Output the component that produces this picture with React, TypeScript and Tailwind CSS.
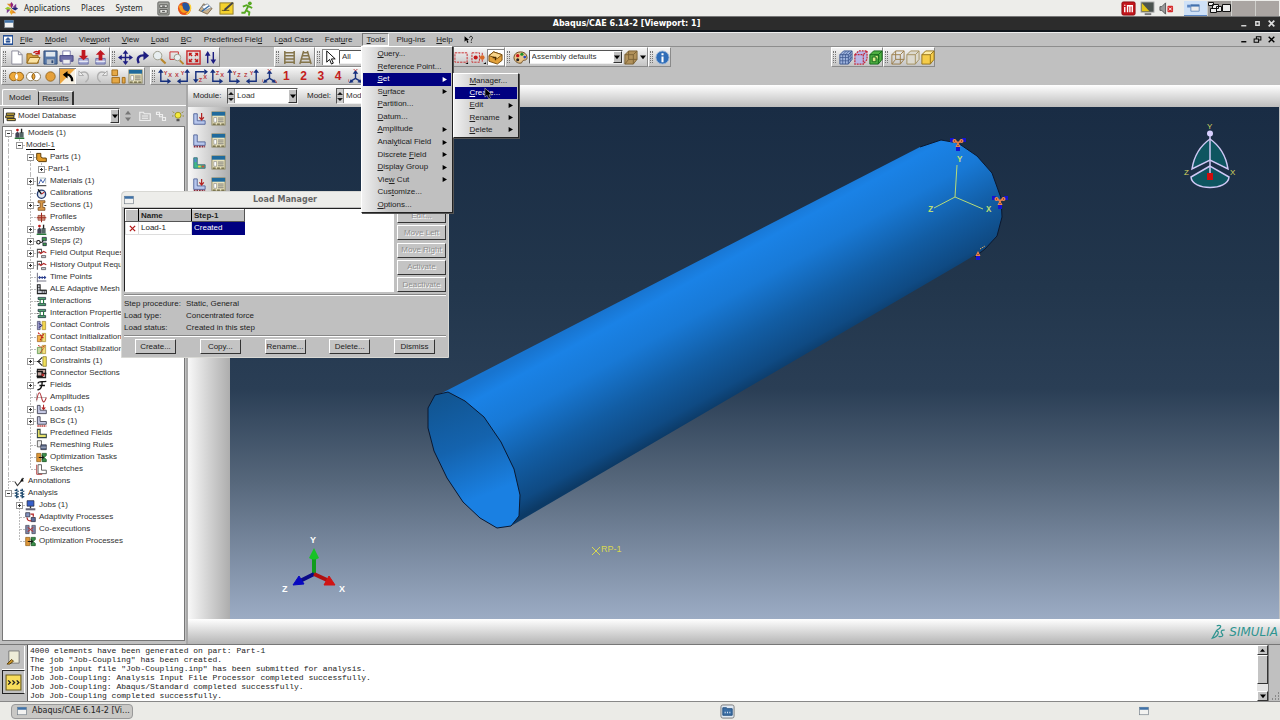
import React from "react";

type Kids = { children?: React.ReactNode };

/* ---------- small helpers ---------- */

function Svg({ s = "size-[15px]", children }: Kids & { s?: string }) {
  return (
    <svg viewBox="0 0 16 16" className={`${s} shrink-0`} fill="none" aria-hidden="true">
      {children}
    </svg>
  );
}

/** Renders a label whose character after "&" is the underlined shortcut key. */
function Key({ text }: { text: string }) {
  const i = text.indexOf("&");
  if (i < 0) return <>{text}</>;
  return (
    <>
      {text.slice(0, i)}
      <u>{text[i + 1]}</u>
      {text.slice(i + 2)}
    </>
  );
}

function Group({ w, children }: Kids & { w: string }) {
  return (
    <div
      className={`${w} flex h-full shrink-0 items-center border border-t-white border-l-white border-r-[#8a8a8a] border-b-[#8a8a8a] bg-linear-to-b from-[#f4f4f4] to-[#c4c4c4]`}
    >
      <span className="ml-px h-3 w-[3px] shrink-0 border-x border-dotted border-[#777]" />
      <div className="flex min-w-0 flex-1 items-center justify-around pl-[2px]">{children}</div>
    </div>
  );
}

function Tool({ label, on, children }: Kids & { label: string; on?: boolean }) {
  return (
    <button
      aria-label={label}
      className={`flex h-4 w-[17px] min-w-[15px] items-center justify-center ${on ? "bg-white shadow-[inset_1px_1px_0_#888]" : ""}`}
    >
      {children}
    </button>
  );
}

function Arrow() {
  return (
    <svg viewBox="0 0 8 8" className="size-[6px]" aria-hidden="true">
      <path d="M0 2h8L4 7z" fill="#000" />
    </svg>
  );
}

function Combo({ w, h, label, options, children }: Kids & { w: string; h: string; label: string; options: string[] }) {
  return (
    <div className={`${w} ${h} relative flex shrink-0 items-center border border-[#555] border-r-[#eee] border-b-[#eee] bg-white`}>
      {children}
      <select aria-label={label} className="h-full min-w-0 flex-1 appearance-none bg-transparent pl-[2px] text-[8px] leading-none text-[#333] outline-none">
        {options.map((o) => (
          <option key={o}>{o}</option>
        ))}
      </select>
      <span className="pointer-events-none flex h-full w-[9px] items-center justify-center border border-white border-r-[#333] border-b-[#333] bg-[#c0c0c0]">
        <Arrow />
      </span>
    </div>
  );
}

/* ---------- desktop panel ---------- */

function DesktopPanel() {
  return (
    <header className="flex h-4 shrink-0 items-center bg-[#ededea] pl-1 font-['Noto_Sans',sans-serif] text-[8px] text-[#222]">
      <Svg>
        <g transform="translate(8 8)">
          <path d="M0-7l2 3-2 4-2-4z" fill="#932279" />
          <path d="M7 0L4 2 0 0l4-2z" fill="#262577" />
          <path d="M0 7l-2-3 2-4 2 4z" fill="#efa724" />
          <path d="M-7 0l3-2 4 2-4 2z" fill="#9ccd2a" />
          <path d="M-5-5h4v4zM5 5H1V1z" fill="#e08a2c" />
          <path d="M5-5v4H1zM-5 5V1h4z" fill="#7d3f8f" />
        </g>
      </Svg>
      <nav className="ml-[5px] flex gap-[11px]">
        <button>Applications</button>
        <button>Places</button>
        <button>System</button>
      </nav>
      <div className="ml-[13px] flex items-center gap-[6px]">
        <Svg>
          <rect x="2" y="1" width="12" height="14" rx="1" fill="#a9aba6" stroke="#5a5c58" />
          <path d="M4 4h8v3H4zM4 9h8v4H4z" fill="#e2e3df" stroke="#5a5c58" />
          <path d="M6.500 5.500h3M6.500 11h3" stroke="#333" />
        </Svg>
        <Svg>
          <circle cx="8" cy="8" r="7" fill="#e5541b" />
          <path d="M6 2a6 6 0 0 1 8 7c-1 2-4 3-5 1-2-1-4-4-3-8z" fill="#25559f" />
          <path d="M2 5c2-1 3 0 4 1 0 3 2 5 5 5-2 3-8 2-9-6z" fill="#f6a31d" />
          <path d="M13 3c3 4 1 9-3 11" stroke="#fbd034" strokeWidth="1.500" />
        </Svg>
        <Svg>
          <path d="M1 10l5-7 9 5-5 6z" fill="#c9b18c" stroke="#7c6a50" />
          <path d="M4 6l6-3 4 4-6 3z" fill="#fff" stroke="#8a95a5" />
          <path d="M4 11l8-6" stroke="#3a6ea5" strokeWidth="1.500" />
        </Svg>
        <Svg>
          <rect x="1" y="2" width="14" height="12" fill="#f5d22d" stroke="#8f7b2a" />
          <path d="M3 10h8" stroke="#6c5b10" />
          <path d="M5 11l1-3 8-7 1.500 1.500L7 10z" fill="#444" />
        </Svg>
        <Svg>
          <circle cx="10.500" cy="2.500" r="2" fill="#56a820" />
          <path d="M3 6l4-1.500L10 6l3 1.500M8.500 6L6.500 10l3.500 2-.5 3.500M6.500 10L5 12.500H1.500" stroke="#56a820" strokeWidth="2" />
        </Svg>
      </div>
      <div className="mr-px ml-auto flex items-center gap-1">
        <Svg>
          <rect x="1" y="1" width="14" height="14" rx="1.500" fill="#c4161c" stroke="#8c0b10" />
          <path d="M4 4v1M4 6.500V12M7 12V5h2.500v7M9.500 5H12v7" stroke="#fff" strokeWidth="1.500" />
        </Svg>
        <Svg>
          <rect x="1" y="1" width="14" height="11" fill="#4c534f" stroke="#bbb" />
          <path d="M2 2l8 9H2z" fill="#e2c317" />
          <path d="M5 14h7" stroke="#777" strokeWidth="2" />
        </Svg>
        <Svg>
          <path d="M1 6h2l4-4v12l-4-4H1z" fill="#999" stroke="#555" />
          <rect x="9" y="5" width="6" height="7" rx="1" fill="#d52a2a" />
          <path d="M10.500 7l3 3M13.500 7l-3 3" stroke="#fff" />
        </Svg>
        <div className="ml-[6px] flex h-[15px] w-[95px] gap-px bg-[#cfcfcb]">
          <div className="flex flex-1 items-center justify-center border-b border-[#5b86c2] bg-[#cfe1f7]">
            <svg viewBox="0 0 20 14" className="h-[13px] w-[19px]">
              <path d="M1 4h6v3H1z" fill="#5b86c2" />
              <path d="M5 4h9v7H5z" fill="#ececec" stroke="#6b8fbf" />
              <path d="M5 4h9v2H5z" fill="#4372ae" />
            </svg>
          </div>
          <div className="flex-1 bg-[#9b9794]">
            <svg viewBox="0 0 23 14" className="h-[14px] w-full">
              <path d="M.5 1.500h5v3h-5zM2.500 7.500h6v4h-6zM4.500 3.500h6v4h-6zM14.500 3.500h8v7h-8zM8.500 5.500h5v5h-5z" fill="#eee" stroke="#111" />
            </svg>
          </div>
          <div className="flex-1 bg-[#aaa5a2]" />
          <div className="flex-1 bg-[#aaa5a2]" />
        </div>
      </div>
    </header>
  );
}

function WindowIcon({ s = "size-[10px]" }: { s?: string }) {
  return (
    <Svg s={s}>
      <rect x="1" y="2" width="14" height="12" fill="#f2f2f0" stroke="#6f7a85" />
      <path d="M1 2h14v4H1z" fill="#3f72a8" />
    </Svg>
  );
}

function TitleBar() {
  return (
    <div className="flex h-4 shrink-0 items-center border-t border-b-2 border-t-[#777] border-b-[#10151c] bg-[#2c2c2c] px-1 text-white">
      <WindowIcon />
      <h1 className="flex-1 text-center font-['DejaVu_Sans',sans-serif] text-[8px] leading-none font-bold">Abaqus/CAE 6.14-2 [Viewport: 1]</h1>
      <div className="flex gap-[5px]">
        <button aria-label="Minimize">
          <Svg s="size-[9px]"><path d="M4 12h9" stroke="#ddd" strokeWidth="2.500" /></Svg>
        </button>
        <button aria-label="Maximize">
          <Svg s="size-[9px]"><path d="M5 5h6v6H5z" stroke="#ddd" strokeWidth="2.500" /></Svg>
        </button>
        <button aria-label="Close">
          <Svg s="size-[9px]"><path d="M3 3l10 10M13 3L3 13" stroke="#ddd" strokeWidth="3" /></Svg>
        </button>
      </div>
    </div>
  );
}

/* ---------- menus ---------- */

type Item = { text: string; sub?: boolean };

const toolsMenu: Item[] = [
  { text: "&Query..." },
  { text: "&Reference Point..." },
  { text: "&Set", sub: true },
  { text: "S&urface", sub: true },
  { text: "&Partition..." },
  { text: "&Datum..." },
  { text: "&Amplitude", sub: true },
  { text: "Anal&ytical Field", sub: true },
  { text: "Discrete &Field", sub: true },
  { text: "&Display Group", sub: true },
  { text: "Vie&w Cut", sub: true },
  { text: "Cus&tomize..." },
  { text: "&Options..." },
];

const setMenu: Item[] = [
  { text: "&Manager..." },
  { text: "&Create..." },
  { text: "&Edit", sub: true },
  { text: "&Rename", sub: true },
  { text: "&Delete", sub: true },
];

function MenuList({ items, active }: { items: Item[]; active: number }) {
  return (
    <>
      {items.map((it, i) => (
        <button
          key={it.text}
          role="menuitem"
          className={`flex items-center justify-between overflow-hidden pr-1 pl-[14px] text-left text-[8px] leading-none whitespace-nowrap ${i === active ? "bg-[#000080] text-white" : "text-[#222]"}`}
        >
          <span>
            <Key text={it.text} />
          </span>
          {it.sub && (
            <svg viewBox="0 0 8 8" className="size-[5px]" aria-hidden="true">
              <path d="M1 0l7 4-7 4z" fill={i === active ? "#fff" : "#000"} />
            </svg>
          )}
        </button>
      ))}
    </>
  );
}

const menuBox =
  "absolute z-30 grid auto-rows-fr border border-t-white border-l-white border-r-[#222] border-b-[#222] bg-[linear-gradient(to_right,#f0f0f0,#c0c0c0_30px)] p-px shadow-[1px_1px_0_#555]";

function ToolsMenu() {
  return (
    <div role="menu" className={`${menuBox} top-[13px] -left-px h-[167px] w-[92px]`}>
      <MenuList items={toolsMenu} active={2} />
      <div role="menu" className={`${menuBox} top-[26px] left-[91px] h-[65px] w-[66px]`}>
        <MenuList items={setMenu} active={1} />
        <svg viewBox="0 0 10 14" className="absolute top-[13px] left-[30px] h-[13px] w-[9px]" aria-hidden="true">
          <path d="M1 1v10l2.500-2 1.800 4 1.900-1-1.700-3.500H9z" fill="#000" stroke="#bbb" strokeWidth=".7" />
        </svg>
      </div>
    </div>
  );
}

const before = ["&File", "&Model", "Vie&wport", "&View", "&Load", "&BC", "Predefined Fiel&d", "L&oad Case", "Feat&ure"];

function MenuBar() {
  return (
    <nav className="flex h-[15px] shrink-0 items-center border-t border-b border-t-[#eee] border-b-[#8d8d8d] bg-[#c0c0c0] pl-[3px] text-[8px] leading-none text-[#222]">
      <Svg s="size-[10px]">
        <rect x="0" y="1" width="16" height="14" fill="#fff" stroke="#234e94" strokeWidth="3" />
        <path d="M4 8h8M8 4l3 3H5zM5 9.500h6v2H5z" stroke="#234e94" fill="#234e94" />
      </Svg>
      <div className="ml-[7px] flex items-center gap-3">
        {before.map((t) => (
          <button key={t}>
            <Key text={t} />
          </button>
        ))}
      </div>
      <div className="relative ml-[10px]">
        <button className="h-[13px] w-[27px] border border-t-[#777] border-l-[#777] border-r-white border-b-white bg-[#c8c8c8]">
          <Key text="&Tools" />
        </button>
        <ToolsMenu />
      </div>
      <div className="ml-[7px] flex items-center gap-[11px]">
        <button>
          <Key text="Plu&g-ins" />
        </button>
        <button>
          <Key text="&Help" />
        </button>
        <button aria-label="Context help">
          <Svg s="size-[9px]">
            <path d="M1 2v10l3-3 2 5 2-1-2-4h3z" fill="#000" />
            <path d="M10 5c0-4 5-3 5 0 0 2-2 2-2 5M13 12v2" stroke="#000" strokeWidth="1.500" />
          </Svg>
        </button>
      </div>
      <div className="mr-1 ml-auto flex gap-[5px]">
        <button aria-label="Minimize viewport">
          <Svg s="size-[9px]"><path d="M4 12h9" stroke="#000" strokeWidth="2.500" /></Svg>
        </button>
        <button aria-label="Restore viewport">
          <Svg s="size-[9px]"><path d="M2 7h8v6H2zM6 6V3h8v6h-3" stroke="#000" strokeWidth="1.800" /></Svg>
        </button>
        <button aria-label="Close viewport">
          <Svg s="size-[9px]"><path d="M3 3l10 10M13 3L3 13" stroke="#000" strokeWidth="2.500" /></Svg>
        </button>
      </div>
    </nav>
  );
}

/* ---------- toolbars ---------- */

function Cube({ fill, line, extra }: { fill: string; line: string; extra?: React.ReactNode }) {
  return (
    <Svg>
      <path d="M2 5l4-4h9v9l-4 5H2z" fill={fill} />
      {extra}
      <path d="M2 5h9v10H2zM2 5l4-4h9l-4 4M15 1v9l-4 5" stroke={line} />
    </Svg>
  );
}

function RowOne() {
  return (
    <div className="flex h-5 shrink-0 items-stretch bg-[#c0c0c0] pl-px">
      <Group w="w-[109px]">
        <Tool label="New">
          <Svg><path d="M3 1h7l4 4v10H3z" fill="#fff" stroke="#8a8a99" /><path d="M10 1v4h4" stroke="#8a8a99" /></Svg>
        </Tool>
        <Tool label="Open">
          <Svg>
            <path d="M1 14V4h5l1 2h6v8z" fill="#d9a441" stroke="#94691a" />
            <path d="M1 14l3-6h11l-3 6z" fill="#fbe3a2" stroke="#94691a" />
            <path d="M8 3c2-2 4-2 6 0M14 0v4h-4" stroke="#c31818" strokeWidth="1.500" />
          </Svg>
        </Tool>
        <Tool label="Save">
          <Svg>
            <path d="M1 1h14v14H1z" fill="#5577a8" stroke="#2f4a75" />
            <path d="M3 2h10v5H3z" fill="#dfe7ee" /><path d="M4 10h8v5H4z" fill="#b5bec9" /><path d="M9 11h2v3H9z" fill="#2f4a75" />
          </Svg>
        </Tool>
        <Tool label="Print">
          <Svg>
            <path d="M4 1h8v5H4z" fill="#fff" stroke="#7c7cab" /><path d="M1 6h14v6H1z" fill="#6d6da8" stroke="#444480" />
            <path d="M4 10h8v5H4z" fill="#eee" stroke="#7c7cab" />
          </Svg>
        </Tool>
        <Tool label="Import">
          <Svg>
            <path d="M3 9h10v6H3z" fill="#a6acd6" stroke="#6a70a5" /><path d="M3 12h10" stroke="#fff" />
            <path d="M6 0h4v6h3l-5 5-5-5h3z" fill="#c01820" />
          </Svg>
        </Tool>
        <Tool label="Export">
          <Svg>
            <path d="M3 9h10v6H3z" fill="#a6acd6" stroke="#6a70a5" /><path d="M3 12h10" stroke="#fff" />
            <path d="M6 11h4V5h3L8 0 3 5h3z" fill="#c01820" />
          </Svg>
        </Tool>
      </Group>
      <Group w="w-[110px]">
        <Tool label="Pan">
          <Svg>
            <path d="M8 2v12M2 8h12" stroke="#1d1d80" strokeWidth="1.500" />
            <path d="M8 0l3 4H5zM8 16l3-4H5zM0 8l4-3v6zM16 8l-4-3v6z" fill="#1d1d80" />
          </Svg>
        </Tool>
        <Tool label="Rotate">
          <Svg><path d="M4 14C1 8 5 5 11 6" stroke="#1d1d80" strokeWidth="2.500" /><path d="M9 1l6 5-6 5z" fill="#1d1d80" /></Svg>
        </Tool>
        <Tool label="Magnify">
          <Svg><circle cx="6" cy="6" r="4.500" fill="#e8eef0" stroke="#9a9a8a" /><path d="M9.500 9.500l5 5" stroke="#b8862c" strokeWidth="2.200" /></Svg>
        </Tool>
        <Tool label="Box zoom">
          <Svg><path d="M1 2h9v8H1z" stroke="#c9292b" /><circle cx="9" cy="8" r="3.500" fill="#e8eef0" stroke="#9a9a8a" /><path d="M11.500 11l4 4" stroke="#b8862c" strokeWidth="2" /></Svg>
        </Tool>
        <Tool label="Auto-fit">
          <Svg>
            <path d="M1 1h14v14H1z" stroke="#c9292b" strokeWidth="1.500" />
            <path d="M3 3h4L3 7zM13 3v4L9 3zM3 13V9l4 4zM13 13H9l4-4z" fill="#c31818" />
            <path d="M4 4l2.500 2.500M12 4L9.500 6.500M4 12l2.500-2.500M12 12L9.500 9.500" stroke="#c31818" strokeWidth="1.500" />
          </Svg>
        </Tool>
        <Tool label="Cycle views">
          <Svg><path d="M5 3v11M11 2v11" stroke="#1d1d80" strokeWidth="1.500" /><path d="M5 1l3 5H2zM11 15l3-5H8z" fill="#1d1d80" /></Svg>
        </Tool>
      </Group>
      <div className="w-[54px] shrink-0" />
      <Group w="w-[41px]">
        <Tool label="Parallel">
          <Svg><path d="M3 1v14M13 1v14M3 3h10M3 6h10M3 9.500h10M3 13h10" stroke="#84744a" strokeWidth="1.600" /></Svg>
        </Tool>
        <Tool label="Perspective">
          <Svg><path d="M6 1L2 15M10 1l4 14M6 3h4M5 6h6M4 9.500h8M3 13h10" stroke="#84744a" strokeWidth="1.600" /></Svg>
        </Tool>
      </Group>
      <Group w="w-[190px]">
        <div className="flex w-full items-center">
          <Tool label="Select" on>
            <Svg><path d="M4 1v12l3-3 2 5 2-1-2-4.500h4z" fill="#fff" stroke="#000" /></Svg>
          </Tool>
          <Combo w="w-[60px]" h="h-[14px]" label="Selection filter" options={["All"]} />
          <div className="ml-auto flex">
            <Tool label="Drag shape">
              <Svg><path d="M1 3h13v10H1z" stroke="#c9292b" strokeDasharray="2.500 1" /><path d="M12 15h3v-2z" fill="#000" /></Svg>
            </Tool>
            <Tool label="Drag scope">
              <Svg><path d="M1 3h8v10H1zM12 3v10" stroke="#c9292b" strokeDasharray="2.500 1" /><circle cx="5" cy="8" r="2.200" fill="#c31818" /><circle cx="12" cy="8" r="2.500" fill="#d86a28" /><path d="M13 15h3v-2z" fill="#000" /></Svg>
            </Tool>
            <Tool label="Select from exterior" on>
              <Svg>
                <path d="M1 6l5-4 9 3v6l-5 4-9-3z" fill="#e3a13a" stroke="#7a4d0c" /><path d="M1 6l9 3 5-4-9-3z" fill="#f8d48a" stroke="#7a4d0c" /><path d="M5 8h3v3" stroke="#4a2c00" strokeWidth="1.500" />
              </Svg>
            </Tool>
          </div>
        </div>
      </Group>
      <Group w="w-[143px]">
        <Tool label="Color palette">
          <Svg>
            <path d="M1 8c0-8 14-8 14 0 0 4-4 2-5 4 0 4-9 2-9-4z" fill="#e8c389" stroke="#6b4a20" />
            <circle cx="5" cy="6" r="1.800" fill="#c31818" /><circle cx="9.500" cy="4.500" r="1.700" fill="#1a8f2a" /><circle cx="12.500" cy="7.500" r="1.500" fill="#2343c0" /><circle cx="5" cy="10.500" r="1.600" fill="#222" />
          </Svg>
        </Tool>
        <Combo w="w-[94px]" h="h-[14px]" label="Color coding" options={["Assembly defaults"]} />
        <Tool label="Translucency">
          <Cube fill="#b1915a" line="#7c6236" extra={<path d="M6 1v9h9M6 10l-4 5" stroke="#7c6236" />} />
        </Tool>
        <button aria-label="Translucency options" className="flex w-2 justify-center">
          <Arrow />
        </button>
      </Group>
      <Group w="w-[23px]">
        <Tool label="Information">
          <Svg>
            <circle cx="8" cy="8" r="7" fill="#2f6db8" stroke="#9db8d8" />
            <path d="M8 3.500v2M8 7v6" stroke="#fff" strokeWidth="2.200" />
          </Svg>
        </Tool>
      </Group>
      <div className="w-[160px] shrink-0" />
      <Group w="w-[52px]">
        <Tool label="Mesh cube">
          <Cube fill="#9fb4de" line="#3d588f" extra={<path d="M5 5v10M8 5v10M2 8h9l4-4M2 11.500h9l4-4M5 5l4-4M8 5l4-4M13 3v9" stroke="#3d588f" strokeWidth=".8" />} />
        </Tool>
        <Tool label="Seed cube">
          <Svg>
            <path d="M2 5l4-4h9v9l-4 5H2z" fill="#b9b5e4" />
            <path d="M2 5h9v10H2zM2 5l4-4h9l-4 4M15 1v9l-4 5" stroke="#c3283c" strokeWidth="1.300" strokeDasharray="2 1" />
          </Svg>
        </Tool>
        <Tool label="Solid mesh">
          <Cube fill="#4fb043" line="#14661a" extra={<path d="M4.500 7.500h4v5h-4zM6.500 5.500h5v5" fill="#d8e88a" stroke="#14661a" />} />
        </Tool>
      </Group>
      <Group w="w-[52px]">
        <Tool label="Wireframe">
          <Cube fill="none" line="#9a7d4a" extra={<path d="M6 1v9h9M6 10l-4 5" stroke="#9a7d4a" />} />
        </Tool>
        <Tool label="Hidden line">
          <Cube fill="#dcd9cf" line="#a3905f" />
        </Tool>
        <Tool label="Shaded">
          <Cube fill="#f5cc49" line="#94721a" extra={<path d="M2 5l4-4h9l-4 4z" fill="#fdeba3" />} />
        </Tool>
      </Group>
    </div>
  );
}

const blue = "#16307e";
const red = "#b8383c";
const axisLetters = [
  ["Y", "X"],
  ["X", "Y"],
  ["X", "Z"],
  ["Z", "X"],
  ["Y", "Z"],
  ["Z", "Y"],
];

function AxisIcon({ kind }: { kind: number }) {
  const [a, b] = axisLetters[kind];
  const mirrored = kind === 1 || kind === 5;
  const t = "font-['Liberation_Sans',sans-serif] text-[6px] font-bold";
  if (kind === 2)
    return (
      <Svg>
        <path d="M3 12V3h9" stroke={blue} strokeWidth="1.500" />
        <path d="M3 15l-3-4h6zM16 3l-4-3v6z" fill={blue} />
        <text x="11" y="11" className={t} fill={red}>{a}</text>
        <text x="6" y="14" className={t} fill={red}>{b}</text>
      </Svg>
    );
  return (
    <Svg>
      {mirrored ? (
        <>
          <path d="M13 3v10H5" stroke={blue} strokeWidth="1.500" />
          <path d="M13 0l3 4h-6zM2 13l4-3v6z" fill={blue} />
          <text x="0" y="9" className={t} fill={red}>{a}</text>
          <text x="6" y="6" className={t} fill={red}>{b}</text>
        </>
      ) : (
        <>
          <path d="M3 3v10h8" stroke={blue} strokeWidth="1.500" />
          <path d="M3 0l3 4H0zM14 13l-4-3v6z" fill={blue} />
          <text x="6" y="6" className={t} fill={red}>{a}</text>
          <text x="11" y="9" className={t} fill={red}>{b}</text>
        </>
      )}
    </Svg>
  );
}

function Triad() {
  return (
    <Svg>
      <path d="M8 4v6l-5 3M8 10l5 3" stroke={blue} strokeWidth="1.500" />
      <path d="M8 1l3 4H5zM1 15l2-4 3 3zM15 15l-2-4-3 3z" fill={blue} />
      <path d="M6 0l2 2 2-2M0 11v3M14 12l2 3" stroke={red} />
    </Svg>
  );
}

function RowTwo() {
  return (
    <div className="flex h-[18px] shrink-0 items-stretch bg-[#c0c0c0] pl-px">
      <Group w="w-[144px]">
        <Tool label="Union">
          <Svg><circle cx="5" cy="8" r="4.500" fill="#eda83a" stroke="#8c5c14" /><circle cx="11" cy="8" r="4.500" fill="#eda83a" stroke="#8c5c14" /><path d="M8 4.600a4.500 4.500 0 0 1 0 6.800 4.500 4.500 0 0 1 0-6.800z" fill="#fff" /></Svg>
        </Tool>
        <Tool label="Intersect">
          <Svg><circle cx="5" cy="8" r="4.500" fill="#fff" stroke="#8c7a54" /><circle cx="11" cy="8" r="4.500" fill="#fff" stroke="#8c7a54" /><path d="M8 4.600a4.500 4.500 0 0 1 0 6.800 4.500 4.500 0 0 1 0-6.800z" fill="#eda83a" stroke="#8c5c14" /></Svg>
        </Tool>
        <Tool label="Display all">
          <Svg><circle cx="8" cy="8" r="5" fill="#e5a03a" stroke="#9a6a20" /></Svg>
        </Tool>
        <Tool label="Replace" on>
          <Svg>
            <path d="M0 0h16v16H0z" fill="#eea63c" /><path d="M0 16L16 0v16z" fill="#f7f0e2" />
            <path d="M3 6l5-4v8z" fill="#000" /><path d="M5 6c5-1 8 2 8 7" stroke="#000" strokeWidth="2.500" />
          </Svg>
        </Tool>
        <Tool label="Undo">
          <Svg><path d="M4 4c8-3 11 5 5 10" stroke="#b0b0b0" strokeWidth="1.500" /><path d="M2 2v5h5z" fill="#eee" stroke="#aaa" /></Svg>
        </Tool>
        <Tool label="Redo">
          <Svg><path d="M12 4C4 1 1 9 7 14" stroke="#b0b0b0" strokeWidth="1.500" /><path d="M14 2v5H9z" fill="#eee" stroke="#aaa" /></Svg>
        </Tool>
        <Tool label="Create display group">
          <Svg><path d="M1 1h6v6H1zM1 9h8v6H1z" fill="#e5a845" stroke="#a06b1a" /><path d="M12 9h3v6h-3z" fill="#e5a845" stroke="#a06b1a" /></Svg>
        </Tool>
        <Tool label="Display group manager">
          <ManagerIcon />
        </Tool>
      </Group>
      <div className="w-[5px] shrink-0" />
      <Group w="w-[215px]">
        {axisLetters.map((_, i) => (
          <Tool key={i} label={`Apply view ${axisLetters[i].join("")}`}>
            <AxisIcon kind={i} />
          </Tool>
        ))}
        <Tool label="Isometric view">
          <Triad />
        </Tool>
        {[1, 2, 3, 4].map((n) => (
          <button key={n} className="h-4 w-[17px] text-[12px] leading-none font-bold text-[#c4201c]">
            {n}
          </button>
        ))}
        <Tool label="Specify view">
          <Triad />
        </Tool>
      </Group>
    </div>
  );
}

/* ---------- model tree ---------- */

function ManagerIcon() {
  return (
    <Svg>
      <rect x="1" y="1" width="14" height="14" fill="#e9e3bd" stroke="#8b8664" />
      <path d="M1 1h14v4H1z" fill="#1f6a9c" />
      <path d="M3 7h3v5H3z" fill="#fff" stroke="#777" strokeWidth=".6" />
      <path d="M7.500 7.500h6M7.500 9.500h6M7.500 11.500h6" stroke="#777" />
      <path d="M2 14h3M6.500 14h3M11 14h3" stroke="#665f3a" strokeWidth="1.500" />
    </Svg>
  );
}

const L = "M2 2h4v7h9v5H2z";

const icons: Record<string, React.ReactNode> = {
  models: (<><path d="M2 14V8l3-3 3 3v6z" fill="#445" /><path d="M8 14V6h6v8z" fill="#566" /><circle cx="5" cy="3" r="2" fill="#c31818" /><path d="M11 1v6" stroke="#222" strokeWidth="2" /><path d="M1 15h14" stroke="#2a7a3a" strokeWidth="2" /></>),
  part: <path d="M1 2h6v5c3 3 5 1 8 2v5H4l-3-3z" fill="#e09a28" stroke="#5c3a06" strokeWidth="1.400" />,
  material: (<><path d="M2 1v13h13" stroke="#555" strokeWidth="1.500" /><path d="M4 12l3-7 3 5 4-7" stroke="#3a5aa8" strokeWidth="1.400" /><path d="M5 3h9v8" stroke="#9aa" /></>),
  calib: (<><circle cx="8" cy="9" r="6" fill="#dfe6f0" stroke="#223a70" strokeWidth="2" /><path d="M8 9L3 2" stroke="#111" strokeWidth="2" /><path d="M8 9l4-3" stroke="#c31818" strokeWidth="1.500" /></>),
  section: (<><path d="M3 1h10v3h-3v7h3v4H3v-4h3V4H3z" fill="#d99a4a" stroke="#6a3a10" /><path d="M1 8h3M12 8h3" stroke="#333" strokeWidth="1.500" /></>),
  profile: (<><path d="M3 5h10v7H3z" fill="#d59a82" stroke="#8a3b2b" /><path d="M8 1v14M1 8.500h14" stroke="#a02a20" strokeWidth="1.500" /></>),
  steps: (<><circle cx="3.500" cy="9" r="2.500" fill="#fff" stroke="#111" strokeWidth="1.500" /><path d="M6 9h3l3-5" stroke="#111" strokeWidth="1.500" /><path d="M9 2h6v5H9zM10 10h5v4h-5z" fill="#3f9a4a" stroke="#113" /></>),
  output: (<><path d="M2 1v13M2 2h6v5H2" stroke="#555" strokeWidth="1.500" /><path d="M4 5l3 3 4-3 4 2" stroke="#b62a2a" strokeWidth="1.600" /><path d="M8 11h6v3H8z" fill="#c9ccd6" stroke="#444" /></>),
  time: (<><path d="M2 1v14M2 13h13" stroke="#778" strokeWidth="1.500" /><path d="M4 8h10M6 6L4 8l2 2M12 6l2 2-2 2M9 6v4" stroke="#2b3f8f" strokeWidth="1.500" /></>),
  ale: (<><path d="M2 1h4v8h9v5H2z" fill="#c9ccd6" stroke="#222" strokeWidth="1.500" /><path d="M2 5h4M2 9h13M9 9v5M12 9v5" stroke="#222" /></>),
  inter: (<><path d="M3 2h11v3H3zM3 11h11v3H3z" fill="#57a774" stroke="#123" /><path d="M6 5v6M11 5v6" stroke="#1a7a3a" strokeWidth="1.600" /><path d="M1 8h3" stroke="#333" /></>),
  contact: (<><path d="M2 2h4v12H2z" fill="#9b9cc9" stroke="#446" /><path d="M9 2h5v12H9z" fill="#f1d54e" stroke="#a6882a" /><path d="M4 5l5 3-5 3" stroke="#2a2a80" strokeWidth="1.400" /></>),
  contactInit: (<><path d="M2 5h6v9H2z" fill="#f5b34a" stroke="#9a5a1a" /><path d="M9 2h5v12H9z" fill="#f1e07a" stroke="#a6882a" /><path d="M3 1l8 8M11 3l-5 9" stroke="#c31818" strokeWidth="1.600" strokeDasharray="3 1" /></>),
  contactStab: (<><path d="M2 5h6v9H2z" fill="#c5d8a0" stroke="#4a8a3a" /><path d="M9 2h5v12H9z" fill="#f1e07a" stroke="#a6882a" /><path d="M3 2l6 3 5-3M6 13l6-8" stroke="#c33818" strokeWidth="1.400" strokeDasharray="3 1" /></>),
  constraint: (<><path d="M10 1h5v14h-5z" fill="#f1e05a" stroke="#7c7020" /><path d="M9 2L3 8l6 6M1 8h6" stroke="#222" strokeWidth="1.500" /></>),
  connector: (<><path d="M2 2h12v12H2z" fill="#c5a8a0" stroke="#222" strokeWidth="1.500" /><path d="M1 5h8v7H1M9 8h6" stroke="#111" strokeWidth="2" /><circle cx="10" cy="10" r="2" fill="#b02a2a" /></>),
  fields: <path d="M3 5c0-4 5-2 12-3M9 3C9 9 7 15 2 14M5 8h8" stroke="#111" strokeWidth="2" />,
  ampl: (<><path d="M1 2v12M1 8h14" stroke="#999" /><path d="M1 12C4-4 6 0 8 8s4 9 7 0" stroke="#b0373c" strokeWidth="1.500" /></>),
  load: (<><path d={L} fill="#c4c8e4" stroke="#445" strokeWidth="1.300" /><path d="M11 1v7M8.500 5L11 8l2.500-3" stroke="#b32222" strokeWidth="1.500" /></>),
  bc: (<><path d="M2 1h4v7h9v4H2z" fill="#c4c8e4" stroke="#445" strokeWidth="1.300" /><path d="M2 14.500h13" stroke="#b32222" strokeWidth="2" strokeDasharray="2 1" /></>),
  predef: <path d={L} fill="#e5e06a" stroke="#344" strokeWidth="1.500" />,
  remesh: (<><path d="M2 1h6v9H2z" fill="#eee" stroke="#333" /><path d="M7 7h8v7H7z" fill="#5b6b8b" stroke="#223" /><path d="M7 10.500h8" stroke="#ccd" /></>),
  optim: (<><path d="M1 2h6v12H1z" fill="#dc9638" stroke="#8a5a14" /><path d="M9 2h6v3l-3 3 3 3v3H9z" fill="#3a8f4a" stroke="#114a1a" /><path d="M4 8h7M9 5l2 3-2 3" stroke="#111" strokeWidth="1.400" /></>),
  sketch: (<><path d="M3 1h5v8h7v5H3z" fill="#fff" stroke="#555" strokeWidth="1.300" /><path d="M1 1v14h8" stroke="#b03434" strokeWidth="1.300" /></>),
  annot: (<><path d="M1 8l4 6 9-11" stroke="#333" strokeWidth="1.500" /><path d="M9 8l3-6 2 6z" fill="#111" /></>),
  analysis: (<path d="M4 1v14M12 1v14M1 3l6 2M1 7l6 2M1 11l6 2M9 3l6 2M9 7l6 2M9 11l6 2" stroke="#1f4a6e" strokeWidth="2" />),
  jobs: (<><path d="M3 1h10v8H3z" fill="#3760c9" stroke="#223" /><path d="M1 12h14v3H1z" fill="#667" /><path d="M8 9v3" stroke="#333" strokeWidth="2" /></>),
  adapt: (<><path d="M1 1h6v6H1z" fill="#8494c0" stroke="#223" /><path d="M9 8h6v6H9z" fill="#5b6b9b" stroke="#223" /><path d="M3 8c0 5 3 5 6 5M8 3h4v4" stroke="#b32222" strokeWidth="1.800" /></>),
  coexec: (<><path d="M1 2h5v12H1zM10 2h5v12h-5z" fill="#7c86a8" stroke="#445" /><path d="M4 5l8 6M4 11l8-6" stroke="#b33a3a" strokeWidth="1.500" /></>),
};

type Node = { l: number; t: string; i?: string; x?: "+" | "-"; sel?: boolean };

const tree: Node[] = [
  { l: 0, t: "Models (1)", i: "models", x: "-" },
  { l: 1, t: "Model-1", x: "-", sel: true },
  { l: 2, t: "Parts (1)", i: "part", x: "-" },
  { l: 3, t: "Part-1", x: "+" },
  { l: 2, t: "Materials (1)", i: "material", x: "+" },
  { l: 2, t: "Calibrations", i: "calib" },
  { l: 2, t: "Sections (1)", i: "section", x: "+" },
  { l: 2, t: "Profiles", i: "profile" },
  { l: 2, t: "Assembly", i: "models", x: "+" },
  { l: 2, t: "Steps (2)", i: "steps", x: "+" },
  { l: 2, t: "Field Output Requests", i: "output", x: "+" },
  { l: 2, t: "History Output Requests", i: "output", x: "+" },
  { l: 2, t: "Time Points", i: "time" },
  { l: 2, t: "ALE Adaptive Mesh Constraints", i: "ale" },
  { l: 2, t: "Interactions", i: "inter" },
  { l: 2, t: "Interaction Properties", i: "inter" },
  { l: 2, t: "Contact Controls", i: "contact" },
  { l: 2, t: "Contact Initializations", i: "contactInit" },
  { l: 2, t: "Contact Stabilizations", i: "contactStab" },
  { l: 2, t: "Constraints (1)", i: "constraint", x: "+" },
  { l: 2, t: "Connector Sections", i: "connector" },
  { l: 2, t: "Fields", i: "fields", x: "+" },
  { l: 2, t: "Amplitudes", i: "ampl" },
  { l: 2, t: "Loads (1)", i: "load", x: "+" },
  { l: 2, t: "BCs (1)", i: "bc", x: "+" },
  { l: 2, t: "Predefined Fields", i: "predef" },
  { l: 2, t: "Remeshing Rules", i: "remesh" },
  { l: 2, t: "Optimization Tasks", i: "optim" },
  { l: 2, t: "Sketches", i: "sketch" },
  { l: 0, t: "Annotations", i: "annot" },
  { l: 0, t: "Analysis", i: "analysis", x: "-" },
  { l: 1, t: "Jobs (1)", i: "jobs", x: "+" },
  { l: 1, t: "Adaptivity Processes", i: "adapt" },
  { l: 1, t: "Co-executions", i: "coexec" },
  { l: 1, t: "Optimization Processes", i: "optim" },
];

/** Tells whether ancestor level `g` still has siblings below row `n`. */
function continues(n: number, g: number) {
  for (let k = n + 1; k < tree.length; k++) {
    if (tree[k].l === g) return true;
    if (tree[k].l < g) return false;
  }
  return false;
}

function TreeRow({ node, n }: { node: Node; n: number }) {
  const guides = Array.from({ length: node.l }, (_, g) => continues(n, g));
  return (
    <li className="flex h-3 items-center whitespace-nowrap">
      {guides.map((on, g) => (
        <span key={g} className="flex h-full w-[11px] shrink-0 justify-center">
          {on && <span className="w-0 border-l border-dashed border-[#bbb]" />}
        </span>
      ))}
      <svg viewBox="0 0 11 12" className="h-3 w-[11px] shrink-0" shapeRendering="crispEdges" aria-hidden="true">
        <path d={`${n === 0 ? "M5.500 6" : "M5.500 0V6"}${continues(n, node.l) ? "V12" : ""}M5.500 6.500H11`} stroke="#bbb" strokeDasharray="2 1" fill="none" />
        {node.x && (
          <>
            <rect x="2.500" y="3.500" width="6" height="6" fill="#fff" stroke="#999" />
            <path d={node.x === "+" ? "M4 6.500h3M5.500 5v3" : "M4 6.500h3"} stroke="#333" />
          </>
        )}
      </svg>
      {node.i && <Svg s="size-[11px]">{icons[node.i]}</Svg>}
      <span className={`${node.i ? "ml-[3px]" : "ml-px"} ${node.sel ? "border-b border-black" : ""}`}>{node.t}</span>
    </li>
  );
}

function Sidebar() {
  return (
    <aside className="flex w-[188px] shrink-0 flex-col border-r-2 border-[#a8a8a8] bg-[#c0c0c0] pt-1">
      <div role="tablist" className="flex h-4 items-end gap-px pl-[2px] text-[8px] leading-none text-[#222]">
        <button role="tab" aria-selected="true" className="h-4 w-[35px] rounded-t-xs border-t border-l border-white bg-[#c6c6c6]">
          Model
        </button>
        <button role="tab" aria-selected="false" className="h-[14px] w-[36px] border-t border-r-2 border-l border-t-white border-r-[#333] border-l-[#333] bg-[#b8b8b8]">
          Results
        </button>
      </div>
      <div className="flex h-[21px] items-center border-t border-white pl-[3px]">
        <Combo w="w-[117px]" h="h-4" label="Database" options={["Model Database"]}>
          <Svg s="ml-px size-[11px]">
            <path d="M2 3h12v3H2zM1 7h12v3H1zM3 11h12v3H3z" fill="#e8c33e" stroke="#222" strokeWidth="1.300" />
          </Svg>
        </Combo>
        <div className="flex flex-1 items-center justify-around">
          <button aria-label="Step through tree">
            <Svg s="size-3"><path d="M8 1l4 5H4zM8 15l4-5H4z" fill="#777" /></Svg>
          </button>
          <button aria-label="New folder">
            <Svg s="size-3"><path d="M1 3h5l1 2h8v9H1zM4 8h8M4 11h8" stroke="#eee" strokeWidth="1.500" /></Svg>
          </button>
          <button aria-label="Link">
            <Svg s="size-3"><path d="M2 3h4v3H2zM6 6h4v3H6zM10 10h4v4h-4z" stroke="#eee" strokeWidth="1.500" /></Svg>
          </button>
          <button aria-label="Tip">
            <Svg s="size-3">
              <circle cx="8" cy="7" r="4" fill="#f4ea3b" stroke="#8a7f10" /><path d="M6 12h4v3H6z" fill="#555" />
              <path d="M1 2l2 2M15 2l-2 2M0 8h2M14 8h2" stroke="#8a7f10" />
            </Svg>
          </button>
        </div>
      </div>
      <div className="mr-px mb-[3px] ml-[2px] min-h-0 flex-1 overflow-hidden border border-[#777] bg-white text-[8px] leading-none text-[#333]">
        <ul>
          {tree.map((node, n) => (
            <TreeRow key={n} node={node} n={n} />
          ))}
        </ul>
      </div>
    </aside>
  );
}

/* ---------- module bar, toolbox, viewport ---------- */

function Spin() {
  return (
    <span className="flex h-full w-[7px] shrink-0 items-center justify-center border-r border-[#888] bg-[#d0d0d0]">
      <svg viewBox="0 0 8 12" className="h-[11px] w-[6px]" aria-hidden="true">
        <path d="M4 0l4 4H0zM4 12l4-4H0zM0 6h8" fill="#111" stroke="#888" strokeWidth=".4" />
      </svg>
    </span>
  );
}

function ModuleBar() {
  return (
    <div className="flex h-[22px] shrink-0 items-center bg-linear-to-b from-white to-[#bdbdbd] pl-[5px] text-[8px] leading-none text-[#222]">
      <span className="w-[34px]">Module:</span>
      <Combo w="w-[71px]" h="h-4" label="Module" options={["Load"]}>
        <Spin />
      </Combo>
      <span className="ml-[9px] w-[29px]">Model:</span>
      <Combo w="w-[71px]" h="h-4" label="Model" options={["Model-1"]}>
        <Spin />
      </Combo>
    </div>
  );
}

const toolbox = [
  { name: "Load", art: (<><path d="M2 2h4v8h9v4H2z" fill="#b7c6ec" stroke="#4c5f96" /><path d="M11 1v8M8.500 6L11 9l2.500-3" stroke="#b32222" strokeWidth="1.400" /></>) },
  { name: "Boundary condition", art: (<><path d="M2 1h4v8h9v4H2z" fill="#b7c6ec" stroke="#4c5f96" /><path d="M2 14.500h13" stroke="#8b2a3a" strokeWidth="2" strokeDasharray="2 1" /></>) },
  { name: "Predefined field", art: (<><path d="M2 2h4v8h9v4H2z" fill="#3fb98a" stroke="#3d6a80" /><path d="M3 3h2v4H3z" fill="#5b7be0" /><path d="M7 11h3v2H7z" fill="#f0d840" /><path d="M11 11h3v2h-3z" fill="#d84a3a" /></>) },
  { name: "Load case", art: (<><path d="M2 1h4v8h9v4H2z" fill="#b7c6ec" stroke="#4c5f96" /><path d="M2 14.500h13" stroke="#8b2a3a" strokeWidth="2" strokeDasharray="2 1" /><path d="M11 1v7M8.500 5L11 8l2.500-3" stroke="#b32222" strokeWidth="1.400" /></>) },
];

function Toolbox() {
  return (
    <div className="flex w-[42px] shrink-0 flex-col gap-[7px] bg-linear-to-r from-[#f8f8f8] to-[#adadad] pt-1 pl-1">
      {toolbox.map((t) => (
        <div key={t.name} className="flex gap-[5px]">
          <button aria-label={`Create ${t.name}`}>
            <Svg s="size-[14px]">{t.art}</Svg>
          </button>
          <button aria-label={`${t.name} manager`}>
            <ManagerIcon />
          </button>
        </div>
      ))}
    </div>
  );
}

function Constraint({ x, y, small }: { x: number; y: number; small?: boolean }) {
  return (
    <g transform={`translate(${x} ${y})`}>
      {!small && <path d="M-8-5h4v4h-4zM4-5h4v4H4z" fill="#1414d0" />}
      <path d="M-2 4h4v4h-4z" fill="#1414d0" />
      {!small && (
        <>
          <path d="M0 0l-4-3M0 0l4-3" stroke="#e07848" strokeWidth="2" />
          <circle cx="-3.500" cy="-2" r="2" fill="#f08850" />
          <circle cx="3.500" cy="-2" r="2" fill="#f08850" />
          <circle cx="-3.500" cy="-2" r=".7" fill="#803010" />
          <circle cx="3.500" cy="-2" r=".7" fill="#803010" />
        </>
      )}
      <path d="M0-1l2.500 5h-5z" fill="#f08850" />
      <circle cx="0" cy="2.500" r=".7" fill="#803010" />
      {small && <path d="M2-3l5-3" stroke="#f0b060" strokeDasharray="1.500 1" />}
    </g>
  );
}

function Viewport() {
  const sans = "font-['Liberation_Sans',sans-serif]";
  const mono = "font-['Liberation_Mono',monospace]";
  return (
    <div className="mr-px min-w-0 flex-1 overflow-hidden bg-[linear-gradient(#192c44,#22364c_35%,#2a3e55_55%,#56677b_73%,#9cacc4)]">
      <svg viewBox="230 107 1049 512" className="h-full w-full" fill="none" role="img" aria-label="Cylinder model">
        <defs>
          <linearGradient id="shell" gradientUnits="userSpaceOnUse" x1="640" y1="290" x2="708" y2="413">
            <stop offset="0" stopColor="#1874cf" />
            <stop offset=".12" stopColor="#1a82e6" />
            <stop offset=".35" stopColor="#1879d6" />
            <stop offset=".65" stopColor="#125da4" />
            <stop offset=".9" stopColor="#0f4a83" />
            <stop offset="1" stopColor="#0c3a66" />
          </linearGradient>
          <linearGradient id="inner" gradientUnits="userSpaceOnUse" x1="445" y1="395" x2="495" y2="520">
            <stop offset="0" stopColor="#115592" />
            <stop offset=".4" stopColor="#1463ae" />
            <stop offset=".8" stopColor="#1a80e2" />
            <stop offset="1" stopColor="#1a80e2" />
          </linearGradient>
        </defs>
        <path d="M440 394L920 147L941 140L958 143L977 156L992 173L1001 198L1002 217L997 236L985 249L960 264L511 526L480 500Z" fill="url(#shell)" />
        <path d="M920 147L941 140L958 143L977 156L992 173L1001 198L1002 217L997 236L985 249L975 257" stroke="#0a1830" />
        <path d="M435 395L448 392L465 401L484 417L501 442L514 469L520 495L519 516L511 526L497 528L480 518L463 502L447 478L434 451L428 428L428 408Z" fill="url(#inner)" stroke="#0a1830" />
        <path d="M957 165L955 197L983 209M955 197L934 208" stroke="#b8dc78" />
        <g fill="#b8dc78" className={`${mono} text-[9px] font-bold`}>
          <text x="957" y="162">Y</text>
          <text x="986" y="212">X</text>
          <text x="928" y="212">Z</text>
        </g>
        <Constraint x={958} y={143} />
        <Constraint x={1000} y={201} />
        <Constraint x={978} y={252} small />

        <g stroke="#cfc8f5" strokeWidth="1.500" fill="#0e5560">
          <path d="M1210 139C1200 146 1194 156 1192 169L1210 160L1228 169C1226 156 1220 146 1210 139Z" />
          <path d="M1210 166L1191 177C1192 191 1228 191 1229 177Z" />
          <path d="M1210 134V176" />
        </g>
        <circle cx="1210" cy="133.500" r="3" fill="#d8d0ff" />
        <path d="M1207 173h6v7h-6z" fill="#d00c0c" />
        <g fill="#d8d860" className={`${sans} text-[8px]`}>
          <text x="1207" y="129">Y</text>
          <text x="1184" y="175">Z</text>
          <text x="1230" y="175">X</text>
        </g>

        <path d="M592 547l8 8M600 547l-8 8" stroke="#d8d850" />
        <text x="601" y="552" fill="#d8d850" className={`${sans} text-[9px]`}>RP-1</text>

        <path d="M314 574V558" stroke="#109c1c" strokeWidth="4" />
        <path d="M314 548l5 10q-5 3-10 0z" fill="#18c226" />
        <path d="M314 574L300 581" stroke="#0a0a88" strokeWidth="4" />
        <path d="M293 585l6-9 5 8z" fill="#0808c0" stroke="#0808c0" />
        <path d="M314 574l13 6" stroke="#b01010" strokeWidth="4" />
        <path d="M335 585l-11 0 5-9z" fill="#d01414" stroke="#d01414" />
        <g fill="#fff" className={`${sans} text-[9px] font-bold`}>
          <text x="310" y="543">Y</text>
          <text x="282" y="592">Z</text>
          <text x="339" y="592">X</text>
        </g>
      </svg>
    </div>
  );
}

function BrandStrip() {
  return (
    <div className="flex h-[25px] shrink-0 items-center justify-end gap-[3px] bg-linear-to-b from-white to-[#b5b5b5] pr-[2px] text-[#2f9490]">
      <svg viewBox="0 0 16 18" className="h-4 w-[15px]" fill="none" stroke="currentColor" strokeWidth="1.400" aria-hidden="true">
        <path d="M6 2c4-1 6 0 3 3L6 7M5 8c5-1 3 6-4 8l5-9M15 7c-4-1-5 2-3 4s0 4-4 3" />
      </svg>
      <span className="font-['DejaVu_Sans',sans-serif] text-[12px] leading-none italic">SIMULIA</span>
    </div>
  );
}

/* ---------- load manager ---------- */

const raised = "border border-t-white border-l-white border-r-[#333] border-b-[#333] bg-[#c4c4c4]";

function LoadManager() {
  return (
    <section
      aria-label="Load Manager"
      className="absolute top-[106px] left-[121px] z-20 flex w-[328px] flex-col rounded-t-sm border border-[#d8d8d4] bg-[#c0c0c0] text-[8px] leading-none text-[#222]"
    >
      <div className="flex h-[15px] items-center rounded-t-sm bg-[#ededea] pl-[2px]">
        <WindowIcon />
        <h2 className="flex-1 pr-3 text-center font-['DejaVu_Sans',sans-serif] font-bold text-[#666]">Load Manager</h2>
      </div>
      <div className="mt-px flex gap-[3px] px-[2px]">
        <div className="h-[84px] flex-1 border border-t-[#222] border-l-[#222] border-r-white border-b-white bg-white">
          <table className="border-collapse text-left">
            <thead>
              <tr className="h-3">
                <th aria-label="Status" className="w-[13px] border border-t-white border-l-white border-r-black border-b-[#555] bg-[#c0c0c0] p-0" />
                <th className="w-[53px] border border-t-white border-r-black border-b-[#555] bg-[#c0c0c0] p-0 pl-[2px]">Name</th>
                <th className="w-[53px] border border-t-white border-r-[#555] border-b-[#555] bg-[#c0c0c0] p-0 pl-[2px]">Step-1</th>
              </tr>
            </thead>
            <tbody>
              <tr className="h-[13px]">
                <td className="border border-[#ddd] p-0">
                  <Svg s="mx-auto size-[7px]">
                    <path d="M2 2l12 12M14 2L2 14" stroke="#b01818" strokeWidth="3" />
                  </Svg>
                </td>
                <td className="border border-[#ddd] p-0 pl-[2px]">Load-1</td>
                <td className="border border-[#000080] bg-[#000080] p-0 pl-[2px] text-white">Created</td>
              </tr>
            </tbody>
          </table>
        </div>
        <div className="flex w-[49px] flex-col justify-between">
          {["Edit...", "Move Left", "Move Right", "Activate", "Deactivate"].map((t) => (
            <button key={t} disabled className={`${raised} h-[15px] overflow-hidden whitespace-nowrap text-[#909090] [text-shadow:1px_1px_0_#fff]`}>
              {t}
            </button>
          ))}
        </div>
      </div>
      <dl className="mx-[2px] mt-[2px] grid grid-cols-[62px_1fr] border-t border-t-[#888] pt-[3px] leading-3 shadow-[inset_0_1px_0_#fff]">
        <dt>Step procedure:</dt>
        <dd>Static, General</dd>
        <dt>Load type:</dt>
        <dd>Concentrated force</dd>
        <dt>Load status:</dt>
        <dd>Created in this step</dd>
      </dl>
      <div className="mx-[2px] mt-px flex justify-between border-t border-[#888] px-[11px] pt-[3px] pb-[3px] shadow-[inset_0_1px_0_#fff]">
        {["Create...", "Copy...", "Rename...", "Delete...", "Dismiss"].map((t) => (
          <button key={t} className={`${raised} h-[15px] w-[41px]`}>
            {t}
          </button>
        ))}
      </div>
    </section>
  );
}

/* ---------- message area and task bar ---------- */

const log = [
  "4000 elements have been generated on part: Part-1",
  'The job "Job-Coupling" has been created.',
  'The job input file "Job-Coupling.inp" has been submitted for analysis.',
  "Job Job-Coupling: Analysis Input File Processor completed successfully.",
  "Job Job-Coupling: Abaqus/Standard completed successfully.",
  "Job Job-Coupling completed successfully.",
];

function Messages() {
  return (
    <div className="flex h-[58px] shrink-0 border-t border-b border-t-[#777] border-b-[#888] bg-[#c0c0c0]">
      <div className="flex w-[27px] shrink-0 flex-col px-[2px] pt-px">
        <button aria-label="Message log" className="flex h-6 items-center justify-center border-r border-b border-white">
          <Svg>
            <path d="M3 1h11v13H3z" fill="#eeecd8" stroke="#777" />
            <path d="M1 15l5-5 2 2-4 3z" fill="#c9932c" stroke="#5c420c" />
          </Svg>
        </button>
        <button aria-label="Command line" className="flex h-6 items-center justify-center border border-t-[#222] border-l-[#222] border-r-white border-b-[#222]">
          <Svg s="size-[17px]">
            <path d="M1 1h14v14H1z" fill="#f8dd5c" stroke="#6a5c1a" />
            <path d="M3 6l2 2-2 2M7 6l2 2-2 2M11 6l2 2-2 2" stroke="#222" strokeWidth="1.300" />
          </Svg>
        </button>
      </div>
      <div className="flex min-w-0 flex-1 border-l border-[#555] bg-white">
        <div className="min-w-0 flex-1 overflow-hidden pt-px pl-[2px] font-['Liberation_Mono',monospace] text-[8px] leading-[9px] whitespace-pre text-[#222]">
          {log.map((t) => (
            <p key={t}>{t}</p>
          ))}
        </div>
        <div className="flex w-[11px] flex-col bg-[#e4e4e4]">
          <button aria-label="Scroll up" className={`${raised} flex h-[10px] items-center justify-center`}>
            <svg viewBox="0 0 8 8" className="size-[5px]"><path d="M0 6h8L4 1z" fill="#000" /></svg>
          </button>
          <div className={`${raised} h-[29px]`} />
          <button aria-label="Scroll down" className={`${raised} mt-auto flex h-[10px] items-center justify-center`}>
            <Arrow />
          </button>
        </div>
      </div>
      <div className="flex w-3 items-end justify-end border-l border-[#777]">
        <svg viewBox="0 0 10 10" className="size-[10px]" aria-hidden="true">
          <path d="M8 2h1M5 5h1M8 5h1M2 8h1M5 8h1M8 8h1" stroke="#777" strokeWidth="1.500" />
        </svg>
      </div>
    </div>
  );
}

function TaskBar() {
  return (
    <footer className="grid h-[18px] shrink-0 grid-cols-3 items-center bg-[#ebebe7] pl-[11px]">
      <button className="flex h-[15px] w-[122px] items-center gap-[5px] rounded-sm border border-[#999] bg-[#c9c8c5] pl-[5px] font-['DejaVu_Sans',sans-serif] text-[8px] leading-none whitespace-nowrap text-[#222]">
        <WindowIcon />
        Abaqus/CAE 6.14-2 [Vi...
      </button>
      <button aria-label="Files" className="ml-[286px] flex w-[15px] justify-center">
        <Svg>
          <rect x="1" y="1" width="14" height="14" rx="2" fill="#dfe8f2" stroke="#777" />
          <path d="M3 4h4l1 1h5v7H3z" fill="#3b6ea5" stroke="#24507f" />
          <path d="M5 9h1M7.500 9h1M10 9h1" stroke="#e8f0fa" strokeWidth="1.500" />
        </Svg>
      </button>
      <button aria-label="Show window" className="ml-auto pr-[131px]">
        <WindowIcon />
      </button>
    </footer>
  );
}

export default function App() {
  return (
    <div className="flex h-screen flex-col overflow-hidden bg-[#c0c0c0] font-['Liberation_Sans',Arial,sans-serif]">
      <DesktopPanel />
      <TitleBar />
      <MenuBar />
      <RowOne />
      <RowTwo />
      <main className="relative flex min-h-0 flex-1">
        <Sidebar />
        <div className="flex min-w-0 flex-1 flex-col">
          <ModuleBar />
          <div className="flex min-h-0 flex-1">
            <Toolbox />
            <Viewport />
          </div>
          <BrandStrip />
        </div>
        <LoadManager />
      </main>
      <Messages />
      <TaskBar />
    </div>
  );
}
